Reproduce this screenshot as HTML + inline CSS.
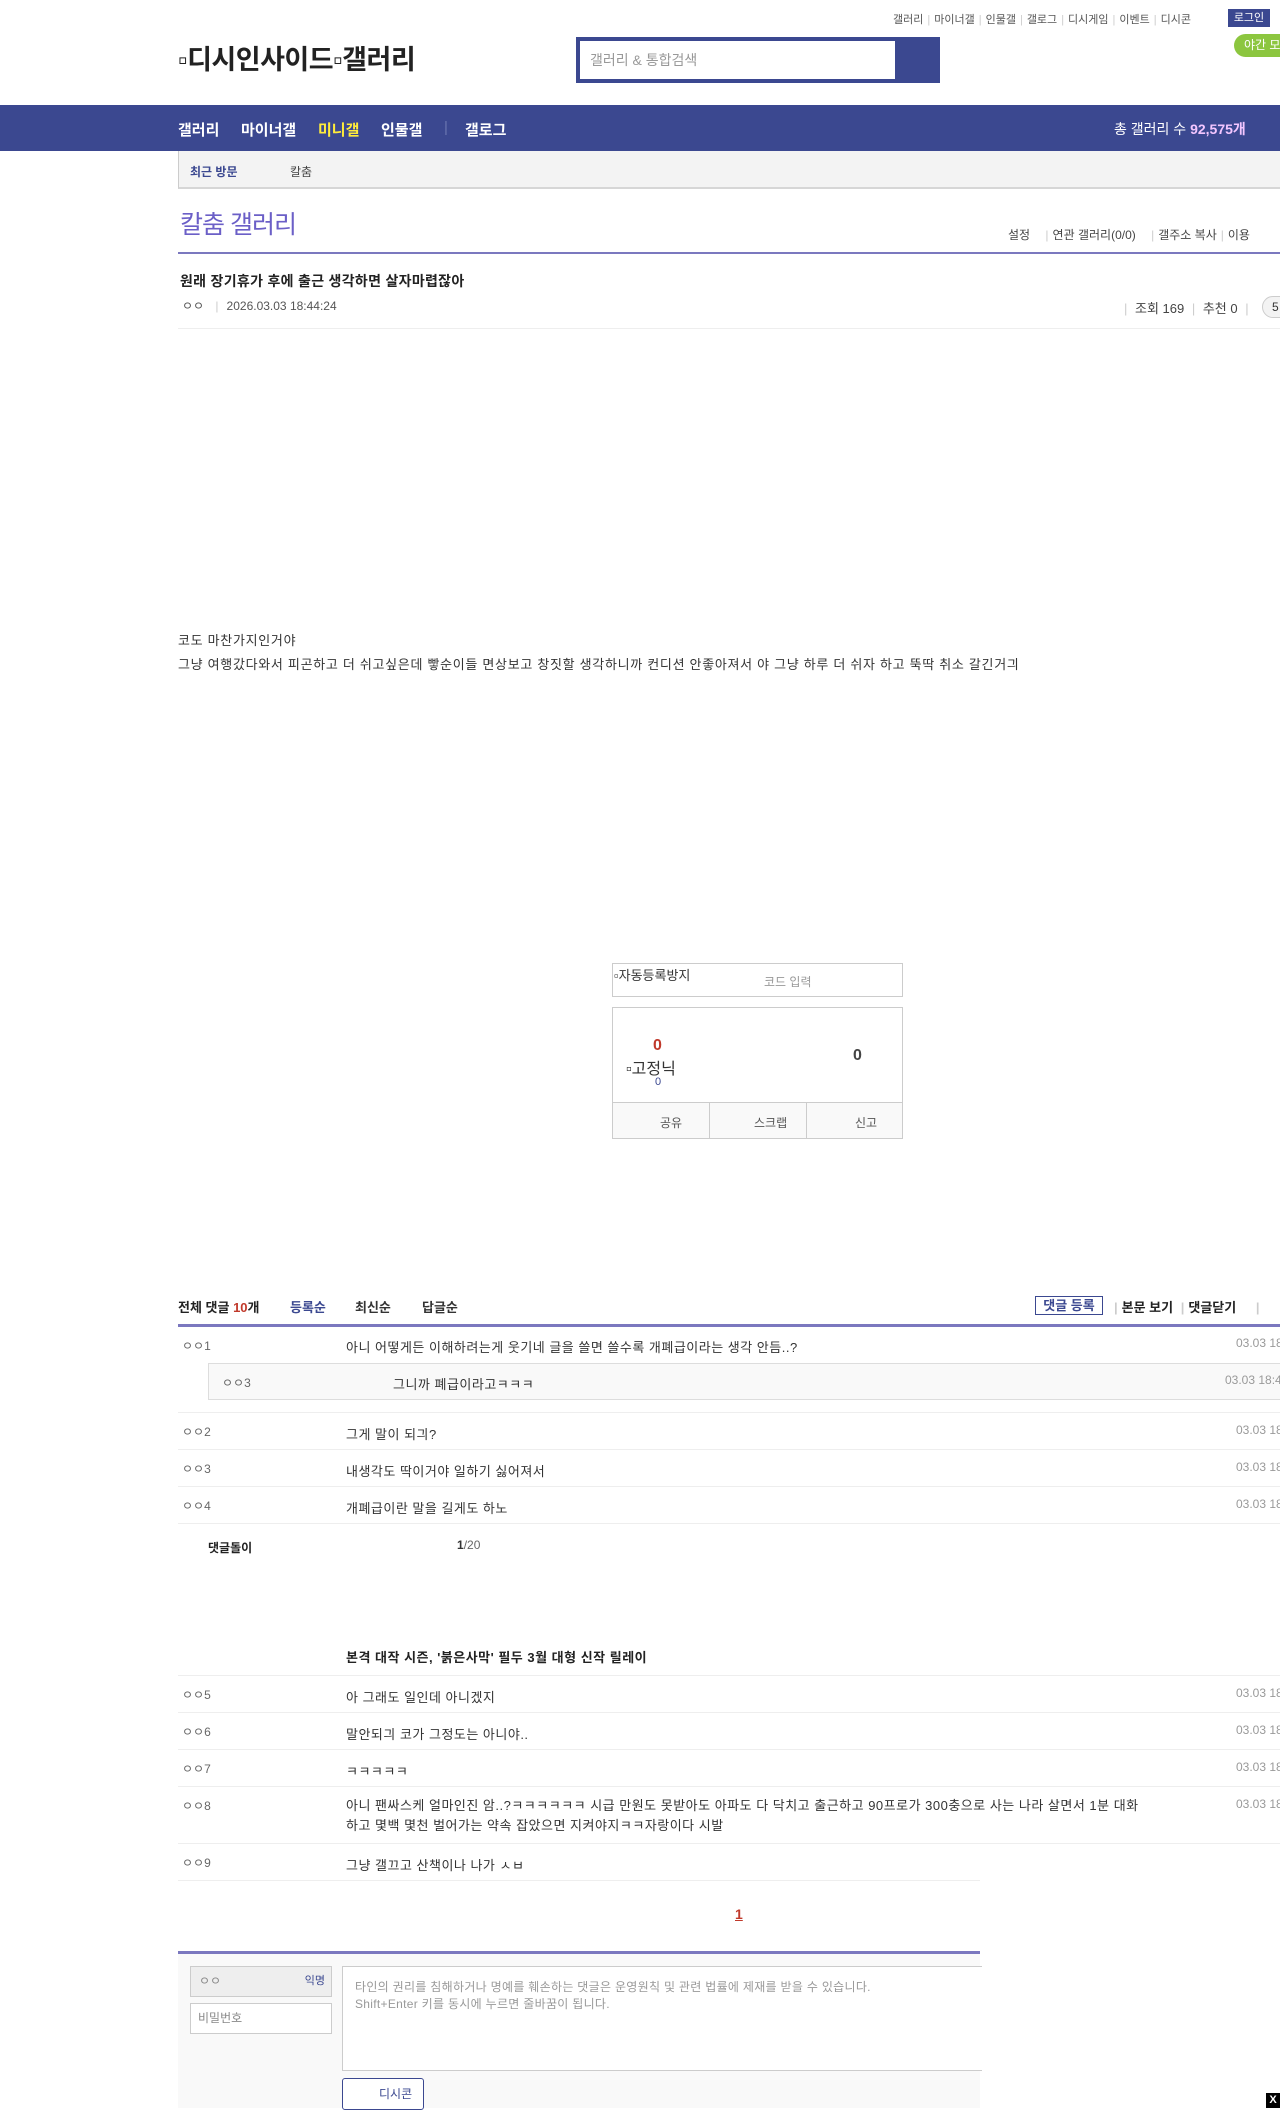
<!DOCTYPE html>
<html><head><meta charset="utf-8">
<style>
*{margin:0;padding:0;box-sizing:border-box}
body{width:1280px;height:2108px;overflow:hidden;background:#fff;font-family:"Liberation Sans","Noto Sans CJK KR",sans-serif;color:#333;position:relative;font-size:13px}
.a{position:absolute;white-space:nowrap}
.tl{font-size:11px;color:#555;top:11px}
.sep{color:#ccc;margin:0 4px}
.nav{position:absolute;left:0;top:105px;width:1280px;height:46px;background:#3b4890}
.nav span{position:absolute;top:14px;font-size:15px;font-weight:bold;color:#fff;white-space:nowrap}
.row{position:absolute;left:178px;width:1102px;border-bottom:1px solid #eee}
.row span{white-space:nowrap}
.nk{position:absolute;left:4px;font-size:12px;color:#666}
.ct{position:absolute;left:168px;font-size:13px;color:#333;letter-spacing:0.5px}
.dt{position:absolute;left:1058px;font-size:12px;color:#999}
</style></head><body>
<div class="a tl" style="left:893px">갤러리<span class="sep">|</span>마이너갤<span class="sep">|</span>인물갤<span class="sep">|</span>갤로그<span class="sep">|</span>디시게임<span class="sep">|</span>이벤트<span class="sep">|</span>디시콘</div>
<div class="a" style="left:1228px;top:9px;width:42px;height:18px;background:#3b4890;color:#fff;font-size:11px;text-align:center;line-height:18px">로그인</div>
<div class="a" style="left:1234px;top:34px;width:60px;height:23px;background:#8cc63f;border-radius:12px;color:#fff;font-size:12px;line-height:23px;padding-left:10px">야간 모드</div>
<div class="a" style="left:178px;top:38px;font-size:27px;color:#222;font-weight:bold;letter-spacing:-0.5px">▫디시인사이드▫갤러리</div>
<div class="a" style="left:576px;top:37px;width:364px;height:46px;background:#3b4890"></div>
<div class="a" style="left:580px;top:41px;width:315px;height:38px;background:#fff;font-size:14px;color:#999;line-height:38px;padding-left:10px">갤러리 &amp; 통합검색</div>
<div class="nav">
<span style="left:178px">갤러리</span><span style="left:241px">마이너갤</span><span style="left:318px;color:#ffec3b">미니갤</span><span style="left:381px">인물갤</span><span style="left:444px;color:#6a76b0;font-weight:normal">|</span><span style="left:465px">갤로그</span>
<span style="left:1114px;font-weight:normal;font-size:14px">총 갤러리 수 <b style="color:#f3c6ff">92,575개</b></span>
</div>
<div class="a" style="left:178px;top:151px;width:1102px;height:38px;background:#f3f3f3;border-left:1px solid #ccc;border-bottom:2px solid #d6d6d6"></div>
<div class="a" style="left:190px;top:163px;font-size:12px;font-weight:bold;color:#3b4890">최근 방문</div>
<div class="a" style="left:290px;top:163px;font-size:12px;color:#444">칼춤</div>
<div class="a" style="left:180px;top:205px;font-size:25px;color:#6b5fc7;letter-spacing:-1px">칼춤 갤러리</div>
<div class="a" style="left:1008px;top:226px;font-size:12px;color:#444">설정 <span class="sep" style="margin-left:12px">|</span>연관 갤러리(0/0) <span class="sep" style="margin-left:12px">|</span>갤주소 복사<span class="sep">|</span>이용</div>
<div class="a" style="left:178px;top:252px;width:1102px;height:2px;background:#7b78bf"></div>
<div class="a" style="left:180px;top:271px;font-size:14px;font-weight:bold;color:#222;letter-spacing:0.3px">원래 장기휴가 후에 출근 생각하면 살자마렵잖아</div>
<div class="a" style="left:182px;top:297px;font-size:12px;color:#555">ㅇㅇ <span class="sep" style="margin:0 8px">|</span>2026.03.03 18:44:24</div>
<div class="a" style="left:1120px;top:298px;font-size:13px;color:#444"><span class="sep">|</span> 조회 169 <span class="sep">|</span> 추천 0 <span class="sep">|</span></div>
<div class="a" style="left:1262px;top:296px;width:30px;height:22px;border:1px solid #ccc;border-radius:11px;background:#f3f3f3;font-size:12px;padding-left:9px;line-height:20px">5</div>
<div class="a" style="left:178px;top:328px;width:1102px;height:1px;background:#eee"></div>
<div class="a" style="left:178px;top:629px;font-size:13px;line-height:24px;letter-spacing:0.7px">코도 마찬가지인거야<br>그냥 여행갔다와서 피곤하고 더 쉬고싶은데 빻순이들 면상보고 창짓할 생각하니까 컨디션 안좋아져서 야 그냥 하루 더 쉬자 하고 뚝딱 취소 갈긴거긔</div>
<div class="a" style="left:612px;top:963px;width:291px;height:34px;border:1px solid #ccc"></div>
<div class="a" style="left:614px;top:965px;font-size:13px">▫자동등록방지</div>
<div class="a" style="left:764px;top:973px;font-size:12px;color:#999">코드 입력</div>
<div class="a" style="left:612px;top:1007px;width:291px;height:132px;border:1px solid #ccc"></div>
<div class="a" style="left:653px;top:1037px;font-size:16px;font-weight:bold;color:#c0392b">0</div>
<div class="a" style="left:626px;top:1055px;font-size:16px;color:#333">▫고정닉</div>
<div class="a" style="left:655px;top:1076px;font-size:11px;color:#3b4890">0</div>
<div class="a" style="left:853px;top:1047px;font-size:16px;font-weight:bold;color:#444">0</div>
<div class="a" style="left:613px;top:1102px;width:289px;height:36px;background:#f9f9f9;border-top:1px solid #ccc"></div>
<div class="a" style="left:709px;top:1102px;width:1px;height:37px;background:#ccc"></div>
<div class="a" style="left:806px;top:1102px;width:1px;height:37px;background:#ccc"></div>
<div class="a" style="left:660px;top:1114px;font-size:12px;color:#555">공유</div>
<div class="a" style="left:754px;top:1114px;font-size:12px;color:#555">스크랩</div>
<div class="a" style="left:855px;top:1114px;font-size:12px;color:#555">신고</div>
<div class="a" style="left:178px;top:1297px;font-size:13px;font-weight:bold;color:#222">전체 댓글 <span style="color:#c0392b">10</span>개</div>
<div class="a" style="left:290px;top:1297px;font-size:13px;font-weight:bold;color:#3b4890">등록순</div>
<div class="a" style="left:355px;top:1297px;font-size:13px;font-weight:bold;color:#333">최신순</div>
<div class="a" style="left:422px;top:1297px;font-size:13px;font-weight:bold;color:#333">답글순</div>
<div class="a" style="left:1035px;top:1296px;width:68px;height:19px;border:1px solid #3b4890;font-size:13px;font-weight:bold;color:#3b4890;text-align:center;line-height:17px">댓글 등록</div>
<div class="a" style="left:1110px;top:1297px;font-size:13px;font-weight:bold;color:#222"><span class="sep">|</span>본문 보기 <span class="sep">|</span>댓글닫기 <span class="sep" style="margin-left:16px">|</span></div>
<div class="a" style="left:178px;top:1324px;width:1102px;height:3px;background:#7b78bf"></div>
<div class="row" style="top:1327px;height:86px"><span class="nk" style="top:10px">ㅇㅇ1</span><span class="ct" style="top:10px">아니 어떻게든 이해하려는게 웃기네 글을 쓸면 쓸수록 개폐급이라는 생각 안듬..?</span><span class="dt" style="top:9px">03.03 18</span></div>
<div class="a" style="left:208px;top:1363px;width:1080px;height:37px;background:#f9f9f9;border:1px solid #ddd"></div>
<div class="a" style="left:222px;top:1374px;font-size:12px;color:#666">ㅇㅇ3</div>
<div class="a" style="left:393px;top:1374px;font-size:13px;letter-spacing:0.5px">그니까 폐급이라고ㅋㅋㅋ</div>
<div class="a" style="left:1225px;top:1373px;font-size:12px;color:#999">03.03 18:4</div>
<div class="row" style="top:1413px;height:37px"><span class="nk" style="top:10px">ㅇㅇ2</span><span class="ct" style="top:11px">그게 말이 되긔?</span><span class="dt" style="top:10px">03.03 18</span></div>
<div class="row" style="top:1450px;height:37px"><span class="nk" style="top:10px">ㅇㅇ3</span><span class="ct" style="top:11px">내생각도 딱이거야 일하기 싫어져서</span><span class="dt" style="top:10px">03.03 18</span></div>
<div class="row" style="top:1487px;height:37px"><span class="nk" style="top:10px">ㅇㅇ4</span><span class="ct" style="top:11px">개폐급이란 말을 길게도 하노</span><span class="dt" style="top:10px">03.03 18</span></div>
<div class="a" style="left:208px;top:1539px;font-size:12px;font-weight:bold;color:#222">댓글돌이</div>
<div class="a" style="left:457px;top:1538px;font-size:12px;color:#666"><b style="color:#333">1</b>/20</div>
<div class="row" style="top:1640px;height:36px"><span class="ct" style="top:7px;font-weight:bold;color:#222">본격 대작 시즌, '붉은사막' 필두 3월 대형 신작 릴레이</span></div>
<div class="row" style="top:1676px;height:37px"><span class="nk" style="top:10px">ㅇㅇ5</span><span class="ct" style="top:11px">아 그래도 일인데 아니겠지</span><span class="dt" style="top:10px">03.03 18</span></div>
<div class="row" style="top:1713px;height:37px"><span class="nk" style="top:10px">ㅇㅇ6</span><span class="ct" style="top:11px">말안되긔 코가 그정도는 아니야..</span><span class="dt" style="top:10px">03.03 18</span></div>
<div class="row" style="top:1750px;height:37px"><span class="nk" style="top:10px">ㅇㅇ7</span><span class="ct" style="top:11px">ㅋㅋㅋㅋㅋ</span><span class="dt" style="top:10px">03.03 18</span></div>
<div class="row" style="top:1787px;height:57px"><span class="nk" style="top:10px">ㅇㅇ8</span><span class="ct" style="top:9px;line-height:20px">아니 팬싸스케 얼마인진 암..?ㅋㅋㅋㅋㅋㅋ 시급 만원도 못받아도 아파도 다 닥치고 출근하고 90프로가 300충으로 사는 나라 살면서 1분 대화<br>하고 몇백 몇천 벌어가는 약속 잡았으면 지켜야지ㅋㅋ자랑이다 시발</span><span class="dt" style="top:10px">03.03 18</span></div>
<div class="row" style="top:1844px;height:37px;width:802px"><span class="nk" style="top:10px">ㅇㅇ9</span><span class="ct" style="top:11px">그냥 갤끄고 산책이나 나가 ㅅㅂ</span></div>
<div class="a" style="left:735px;top:1906px;font-size:14px;font-weight:bold;color:#c0392b;text-decoration:underline">1</div>
<div class="a" style="left:178px;top:1951px;width:802px;height:3px;background:#7b78bf"></div>
<div class="a" style="left:178px;top:1954px;width:802px;height:154px;background:#f9f9f9"></div>
<div class="a" style="left:190px;top:1966px;width:142px;height:31px;background:#eee;border:1px solid #ccc;font-size:12px;color:#888;line-height:29px;padding-left:8px">ㅇㅇ<span style="position:absolute;right:6px;color:#3b4890;font-size:11px">익명</span></div>
<div class="a" style="left:190px;top:2003px;width:142px;height:31px;background:#fff;border:1px solid #ccc;font-size:12px;color:#888;line-height:29px;padding-left:7px">비밀번호</div>
<div class="a" style="left:342px;top:1966px;width:640px;height:105px;background:#fff;border:1px solid #ccc;border-right:none;font-size:12px;color:#999;line-height:17px;padding:12px 12px;letter-spacing:0.3px">타인의 권리를 침해하거나 명예를 훼손하는 댓글은 운영원칙 및 관련 법률에 제재를 받을 수 있습니다.<br>Shift+Enter 키를 동시에 누르면 줄바꿈이 됩니다.</div>
<div class="a" style="left:342px;top:2078px;width:82px;height:32px;background:#fff;border:1px solid #3b4890;border-radius:3px;font-size:12px;color:#3b4890;line-height:30px;padding-left:36px">디시콘</div>
<div class="a" style="left:1266px;top:2093px;width:14px;height:15px;background:#000;color:#fff;font-size:11px;font-weight:bold;text-align:center;line-height:15px">X</div>
</body></html>
